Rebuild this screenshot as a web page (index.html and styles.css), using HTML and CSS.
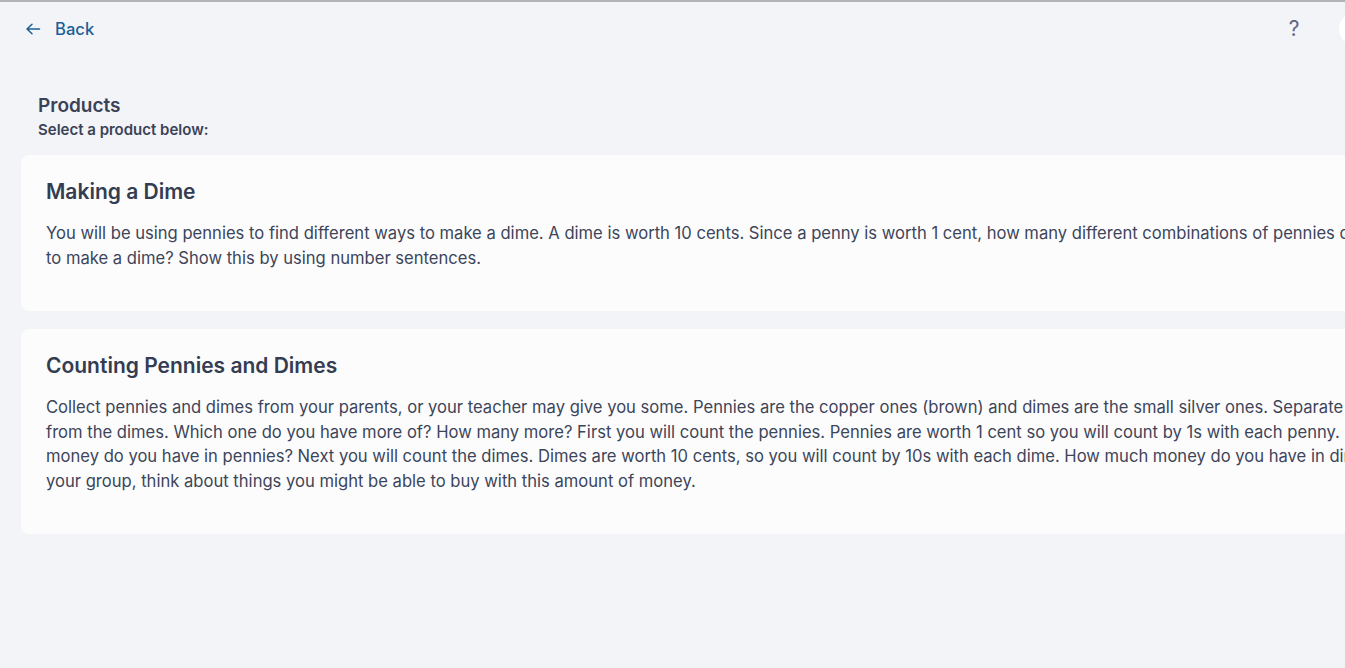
FILE: index.html
```html
<!DOCTYPE html>
<html>
<head>
<meta charset="utf-8">
<link rel="stylesheet" href="styles.css">
</head>
<body>
<div class="topline"></div>
<header class="topbar">
  <a class="back" href="#"><svg class="arrow" width="16" height="16" viewBox="0 0 16 16"><path d="M14.5 8H2M7 3.2L2 8l5 4.8" fill="none" stroke="currentColor" stroke-width="1.5" stroke-linecap="round" stroke-linejoin="round"/></svg><span>Back</span></a>
  <div class="tools">
    <span class="help">?</span>
    <span class="avatar"></span>
  </div>
</header>
<main class="content">
  <div class="intro">
    <h1>Products</h1>
    <p>Select a product below:</p>
  </div>
  <section class="card">
    <h2>Making a Dime</h2>
    <p>You will be using pennies to find different ways to make a dime. A dime is worth 10 cents. Since a penny is worth 1 cent, how many different combinations of pennies can you use to make a dime? Show this by using number sentences.</p>
  </section>
  <section class="card">
    <h2>Counting Pennies and Dimes</h2>
    <p>Collect pennies and dimes from your parents, or your teacher may give you some. Pennies are the copper ones (brown) and dimes are the small silver ones. Separate the pennies from the dimes. Which one do you have more of? How many more? First you will count the pennies. Pennies are worth 1 cent so you will count by 1s with each penny. How much money do you have in pennies? Next you will count the dimes. Dimes are worth 10 cents, so you will count by 10s with each dime. How much money do you have in dimes? With your group, think about things you might be able to buy with this amount of money.</p>
  </section>
</main>
</body>
</html>
```
FILE: styles.css
```css
html, body {
  margin: 0;
  padding: 0;
  background: #f3f4f8;
  overflow: hidden;
  width: 1345px;
  height: 668px;
}
body {
  font-family: Inter, "Noto Sans", sans-serif;
  color: #3a4257;
}
.topline {
  height: 2px;
  background: #b3b3b5;
}
.topbar {
  display: flex;
  justify-content: space-between;
  align-items: center;
  height: 53px;
  padding-left: 25px;
  width: 1500px;
  box-sizing: border-box;
}
.back {
  display: flex;
  align-items: center;
  gap: 14px;
  color: #1b5f98;
  text-decoration: none;
  font-size: 16.6px;
  font-weight: 500;
}
.arrow { display: block; }
.tools {
  display: flex;
  align-items: center;
  gap: 38px;
}
.help {
  font-size: 21px;
  color: #5f6680;
  width: 14px;
  text-align: center;
}
.avatar {
  width: 32px;
  height: 32px;
  border-radius: 50%;
  background: #ffffff;
  margin-right: 129px;
}
.content {
  padding: 39px 0 0 21px;
  width: 1500px;
}
.intro {
  padding-left: 17px;
  margin-bottom: 13px;
}
.intro h1 {
  margin: 0;
  font-size: 19px;
  font-weight: 600;
  line-height: 24px;
  color: #3a4257;
}
.intro p {
  margin: 0;
  font-size: 15px;
  font-weight: 600;
  line-height: 24px;
  color: #3a4257;
}
.card {
  background: #fcfcfd;
  border-radius: 8px;
  padding: 23px 25px 41px 25px;
  margin-bottom: 18px;
  width: 1395px;
}
.card h2 {
  margin: 0 0 15px 0;
  font-size: 21px;
  font-weight: 600;
  line-height: 28px;
  color: #343c51;
}
.card p {
  margin: 0;
  font-size: 16.6px;
  line-height: 24.5px;
  color: #3d4559;
}
```
